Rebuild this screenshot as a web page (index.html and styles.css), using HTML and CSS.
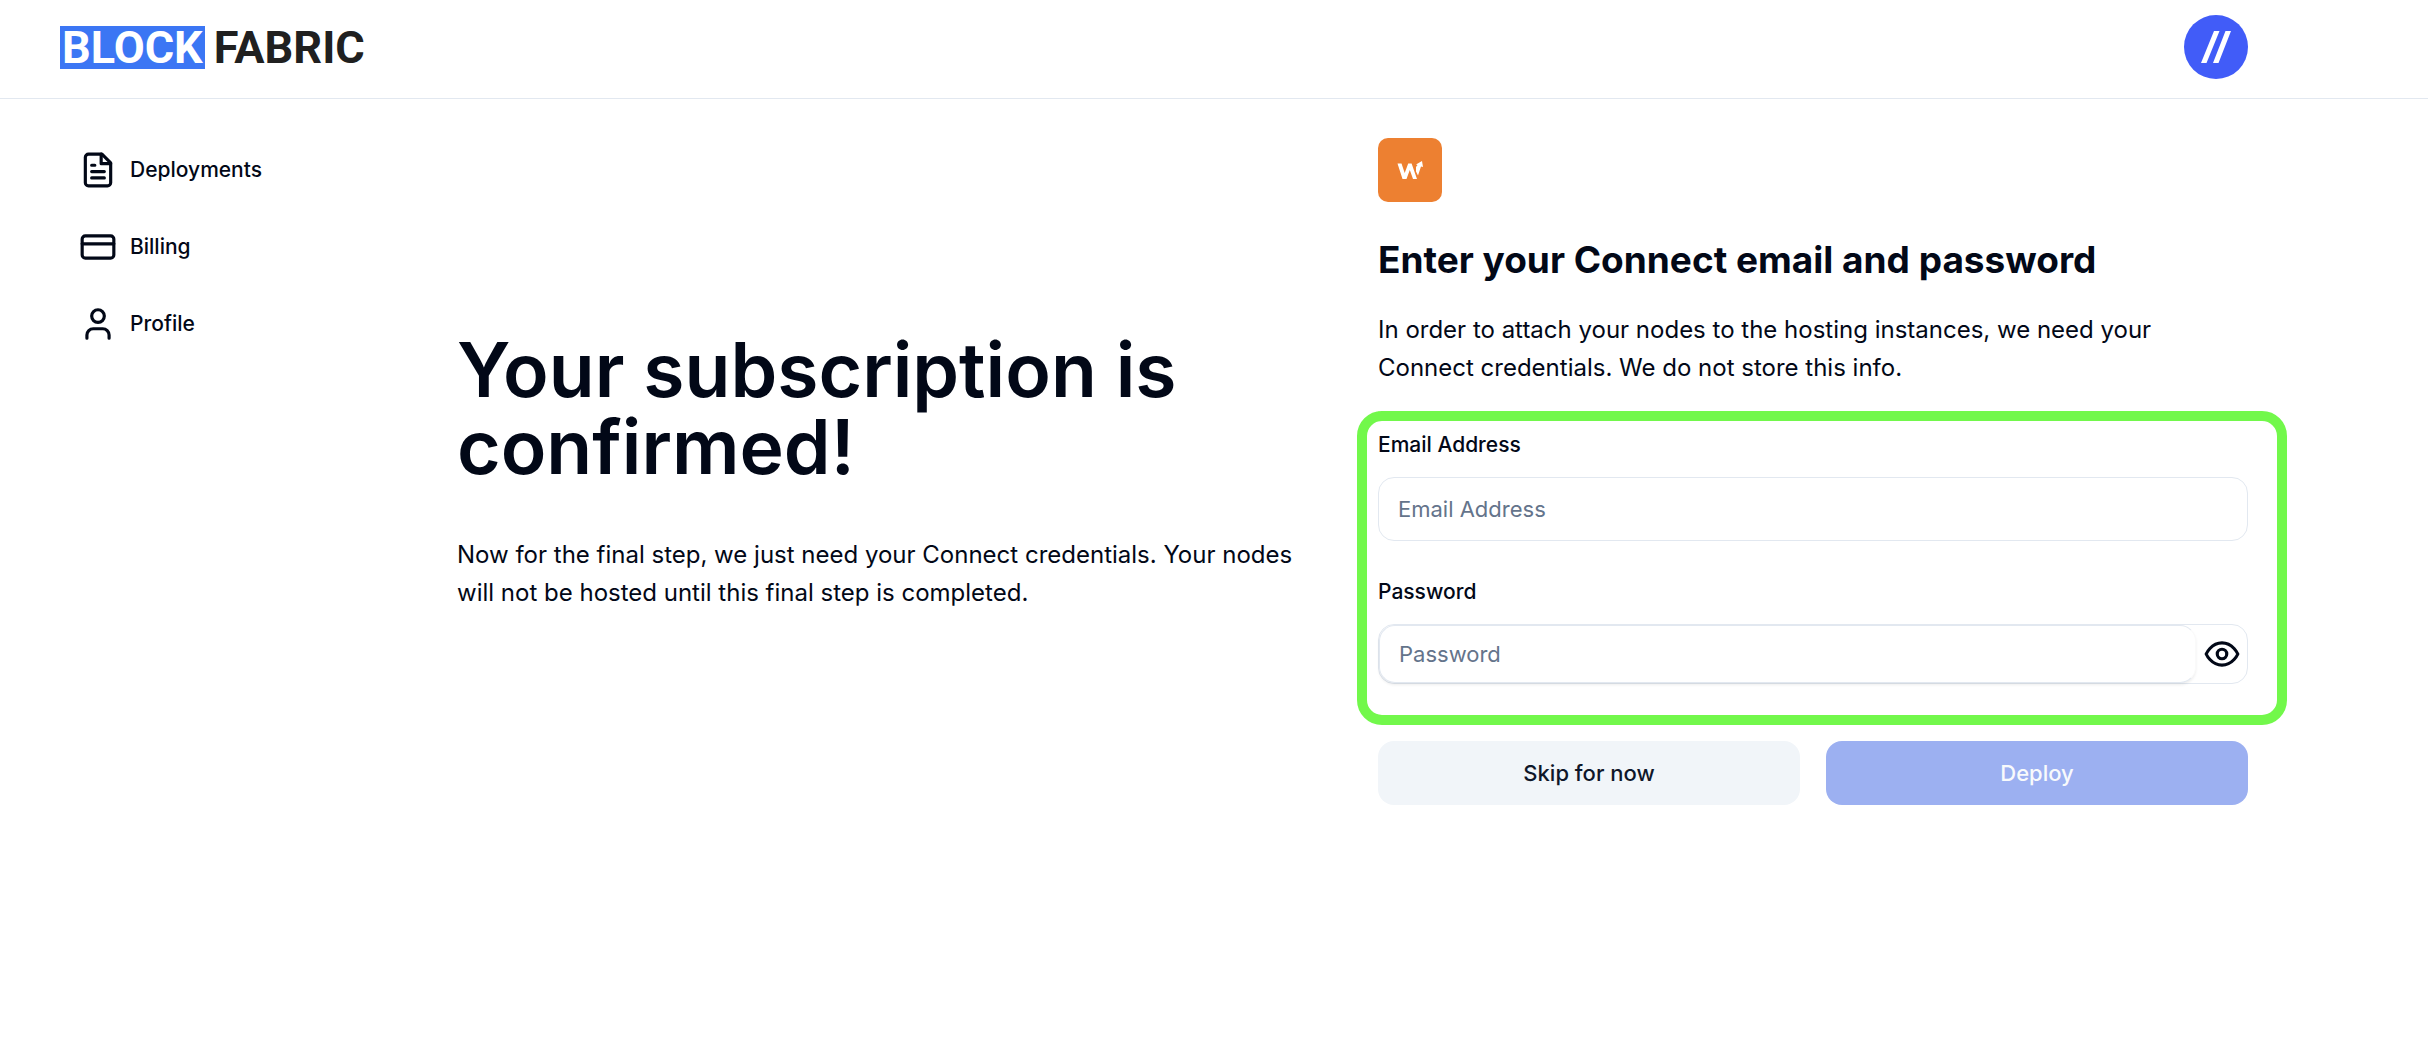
FILE: index.html
```html
<!DOCTYPE html>
<html lang="en">
<head>
<meta charset="utf-8">
<meta name="viewport" content="width=device-width, initial-scale=1">
<title>Block Fabric</title>
<link rel="stylesheet" href="styles.css">
</head>
<body>
<header class="topbar">
  <a class="brand" href="#"><span class="brand-block">BLOCK</span><span class="brand-fabric">FABRIC</span></a>
  <button class="avatar" type="button" aria-label="Account">
    <svg viewBox="0 0 64 64" aria-hidden="true"><path d="M30 16h5.500L22.500 48H17zM41.500 16H47L34.500 48H29z"/></svg>
  </button>
</header>
<div class="shell">
  <nav class="sidebar">
    <a href="#"><svg class="icon" viewBox="0 0 24 24" aria-hidden="true"><path d="M14.500 2H6a2 2 0 0 0-2 2v16a2 2 0 0 0 2 2h12a2 2 0 0 0 2-2V7.500L14.500 2z"/><path d="M14 2v6h6M16 13H8M16 17H8M10 9H8"/></svg>Deployments</a>
    <a href="#"><svg class="icon" viewBox="0 0 24 24" aria-hidden="true"><rect width="20" height="14" x="2" y="5" rx="2"/><path d="M2 10h20"/></svg>Billing</a>
    <a href="#"><svg class="icon" viewBox="0 0 24 24" aria-hidden="true"><path d="M19 21v-2a4 4 0 0 0-4-4H9a4 4 0 0 0-4 4v2"/><circle cx="12" cy="7" r="4"/></svg>Profile</a>
  </nav>
  <main class="content">
    <section class="intro">
      <h1>Your subscription is confirmed!</h1>
      <p>Now for the final step, we just need your Connect credentials. Your nodes will not be hosted until this final step is completed.</p>
    </section>
    <form class="connect">
      <svg class="app-mark" viewBox="0 0 64 64" aria-hidden="true"><path d="M19.500 25.500h4l3.200 9.500 3.500-9.500h3.400l5.400 15.500h-4l-3.200-9-3.300 9h-4z"/><path d="M38 29l1.500-2-1.500-.5 6-3.500 1 6-2-.5-3 9-2-4z"/></svg>
      <h2>Enter your Connect email and password</h2>
      <p>In order to attach your nodes to the hosting instances, we need your Connect credentials. We do not store this info.</p>
      <div class="fields">
        <div class="field">
          <label for="email">Email Address</label>
          <input class="text-input" id="email" type="email" placeholder="Email Address">
        </div>
        <div class="field">
          <label for="password">Password</label>
          <div class="password-box">
            <input class="text-input" id="password" type="password" placeholder="Password">
            <button class="reveal" type="button" aria-label="Show password"><svg class="icon" viewBox="0 0 24 24" aria-hidden="true"><path d="M2 12s3-7 10-7 10 7 10 7-3 7-10 7-10-7-10-7Z"/><circle cx="12" cy="12" r="3"/></svg></button>
          </div>
        </div>
      </div>
      <div class="actions">
        <button class="btn btn-muted" type="button">Skip for now</button>
        <button class="btn btn-primary" type="submit" disabled>Deploy</button>
      </div>
    </form>
  </main>
</div>
</body>
</html>
```
FILE: styles.css
```css
* { box-sizing: border-box; }
body {
  margin: 0;
  background: #fff;
  color: #020817;
  font-family: Inter, "Liberation Sans", sans-serif;
  font-size: 24px;
  line-height: 38px;
}
h1, h2, p { margin: 0; }
a { color: inherit; text-decoration: none; }
button, input { font: inherit; color: inherit; }
button { border: 0; padding: 0; background: none; cursor: pointer; }

.topbar {
  display: flex;
  justify-content: space-between;
  align-items: flex-start;
  padding: 15px 180px 19px 60px;
  border-bottom: 1px solid #e2e8f0;
}
.brand {
  display: flex;
  gap: 9px;
  margin-top: 11px;
  font-family: Roboto, "Liberation Sans", sans-serif;
  font-size: 45px;
  font-weight: 700;
  line-height: 43px;
}
.brand-block { padding: 0 2px; background: #3b76f4; color: #fff; }
.brand-fabric { color: #202020; }
.avatar {
  width: 64px;
  height: 64px;
  border-radius: 50%;
  background: #415cf8;
}
.avatar svg { display: block; fill: #fff; }

.icon {
  flex: none;
  width: 38px;
  height: 38px;
  fill: none;
  stroke: currentColor;
  stroke-width: 2;
  stroke-linecap: round;
  stroke-linejoin: round;
}
.shell {
  display: grid;
  grid-template-columns: 457px 1fr;
  padding-right: 180px;
}
.sidebar {
  display: flex;
  flex-direction: column;
  gap: 39px;
  padding: 52px 0 0 79px;
  font-size: 21px;
  font-weight: 500;
}
.sidebar a { display: flex; align-items: center; gap: 13px; }

.content {
  display: grid;
  grid-template-columns: 1fr 1fr;
  gap: 51px;
  align-items: center;
  padding-top: 39px;
}
.intro { display: grid; gap: 51px; }
h1 { font-size: 75px; font-weight: 600; line-height: 77px; }
h2 { margin: 32px 0 26px; font-size: 37px; font-weight: 700; line-height: 51px; }
.app-mark { display: block; width: 64px; height: 64px; border-radius: 10px; background: #ed8031; fill: #fff; }

.fields {
  position: relative;
  display: grid;
  gap: 38px;
  margin-top: 45px;
}
/* Highlight frame round the two fields */
.fields::after {
  content: "";
  position: absolute;
  inset: -21px -39px -41px -21px;
  border: 10px solid #72f84b;
  border-radius: 25px;
  pointer-events: none;
}
.field { display: grid; gap: 19px; }
label { font-size: 21px; font-weight: 500; line-height: 26px; }
.text-input {
  min-width: 0;
  height: 64px;
  padding: 0 19px;
  border: 1px solid #e2e8f0;
  border-radius: 16px;
  background: #fff;
  font-size: 22px;
}
.text-input::placeholder { color: #64748b; opacity: 1; }
.password-box {
  display: flex;
  align-items: center;
  padding-right: 6px;
  border: 1px solid #e2e8f0;
  border-radius: 16px;
}
.password-box .text-input { flex: 1; height: 58px; box-shadow: 0 2px 3px rgb(0 0 0 / 7%); border-right-color: #fafafa; }
.reveal { display: flex; margin-left: 7px; }

.actions {
  display: grid;
  grid-template-columns: 1fr 1fr;
  gap: 26px;
  margin-top: 57px;
}
.btn { height: 64px; border-radius: 16px; font-size: 22px; font-weight: 500; }
.btn-muted { background: #f1f5f9; color: #0f172a; }
.btn-primary { background: #9cb0f1; color: #f8fafc; }
```
